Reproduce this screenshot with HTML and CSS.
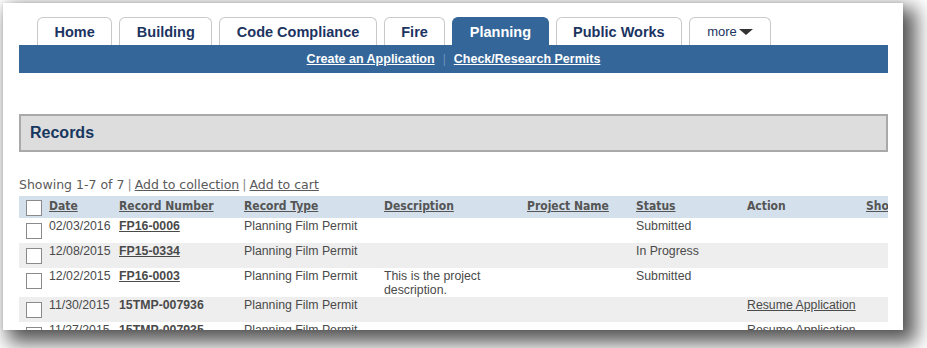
FILE: index.html
```html
<!DOCTYPE html>
<html lang="en">
<head>
<meta charset="UTF-8">
<meta name="viewport" content="width=device-width, initial-scale=1.0">
<title>Records</title>
<link rel="stylesheet" href="styles.css">
</head>
<body>
<div class="page">

  <div class="tabs">
    <a class="tab" href="#">Home</a>
    <a class="tab" href="#">Building</a>
    <a class="tab" href="#">Code Compliance</a>
    <a class="tab" href="#">Fire</a>
    <a class="tab active" href="#">Planning</a>
    <a class="tab" href="#">Public Works</a>
    <a class="tab more" href="#">more<span class="caret"></span></a>
  </div>

  <div class="subnav">
    <a href="#">Create an Application</a>
    <span class="sep">|</span>
    <a href="#">Check/Research Permits</a>
  </div>

  <div class="records-head">
    <h2>Records</h2>
  </div>

  <div class="showing">
    Showing 1-7 of 7<span class="bar">|</span><a href="#">Add to collection</a><span class="bar">|</span><a href="#">Add to cart</a>
  </div>

  <div class="grid-wrap">
    <table class="grid">
      <colgroup>
        <col class="c-chk"><col class="c-date"><col class="c-num"><col class="c-type">
        <col class="c-desc"><col class="c-proj"><col class="c-status"><col class="c-action"><col class="c-show">
      </colgroup>
      <thead>
        <tr>
          <th><span class="chk"></span></th>
          <th><a href="#">Date</a></th>
          <th><a href="#">Record Number</a></th>
          <th><a href="#">Record Type</a></th>
          <th><a href="#">Description</a></th>
          <th><a href="#">Project Name</a></th>
          <th><a href="#">Status</a></th>
          <th>Action</th>
          <th><a href="#">Short Notes</a></th>
        </tr>
      </thead>
      <tbody>
        <tr>
          <td><span class="chk"></span></td>
          <td>02/03/2016</td>
          <td><a class="num" href="#">FP16-0006</a></td>
          <td>Planning Film Permit</td>
          <td></td>
          <td></td>
          <td>Submitted</td>
          <td></td>
          <td></td>
        </tr>
        <tr class="alt">
          <td><span class="chk"></span></td>
          <td>12/08/2015</td>
          <td><a class="num" href="#">FP15-0334</a></td>
          <td>Planning Film Permit</td>
          <td></td>
          <td></td>
          <td>In Progress</td>
          <td></td>
          <td></td>
        </tr>
        <tr>
          <td><span class="chk"></span></td>
          <td>12/02/2015</td>
          <td><a class="num" href="#">FP16-0003</a></td>
          <td>Planning Film Permit</td>
          <td>This is the project description.</td>
          <td></td>
          <td>Submitted</td>
          <td></td>
          <td></td>
        </tr>
        <tr class="alt">
          <td><span class="chk"></span></td>
          <td>11/30/2015</td>
          <td><b class="num">15TMP-007936</b></td>
          <td>Planning Film Permit</td>
          <td></td>
          <td></td>
          <td></td>
          <td><a href="#">Resume Application</a></td>
          <td></td>
        </tr>
        <tr>
          <td><span class="chk"></span></td>
          <td>11/27/2015</td>
          <td><b class="num">15TMP-007935</b></td>
          <td>Planning Film Permit</td>
          <td></td>
          <td></td>
          <td></td>
          <td><a href="#">Resume Application</a></td>
          <td></td>
        </tr>
      </tbody>
    </table>
  </div>

</div>
</body>
</html>
```

FILE: styles.css
```css
html {
  background: #fff;
}

body {
  margin: 0;
  padding: 3px;
  height: 348px;
  box-sizing: border-box;
  overflow: hidden;
  font-family: "Liberation Sans", Arial, sans-serif;
}

.page {
  width: 869px;
  height: 313px;
  padding: 14px 15px 0 16px;
  background: #fff;
  overflow: hidden;
  box-shadow: 0 0 4px rgba(0, 0, 0, 0.12), 9px 9px 18px 4px rgba(0, 0, 0, 0.65);
}

/* tabs */
.tabs {
  display: flex;
  gap: 7px;
  padding-left: 18px;
  height: 28px;
}

.tab {
  display: flex;
  align-items: center;
  padding: 0 16.5px;
  height: 27px;
  border: 1px solid #c9c9c9;
  border-bottom: none;
  border-radius: 6px 6px 0 0;
  background: #fff;
  color: #1b3461;
  font-size: 14.5px;
  font-weight: bold;
  text-decoration: none;
}

.tab.active {
  background: #346699;
  border-color: #346699;
  color: #fff;
}

.tab.more {
  width: 46px;
  padding: 0 17px 0 17px;
  font-size: 13px;
  font-weight: normal;
}

.caret {
  display: inline-block;
  margin-left: 2px;
  margin-top: 1px;
  border-left: 7px solid transparent;
  border-right: 7px solid transparent;
  border-top: 6px solid #333;
}

/* blue sub navigation */
.subnav {
  display: flex;
  justify-content: center;
  align-items: center;
  gap: 8px;
  height: 28px;
  background: #346699;
}

.subnav a {
  color: #fff;
  font-size: 12.5px;
  font-weight: bold;
}

.subnav .sep {
  color: #6f8fb5;
  font-size: 12px;
}

/* records box */
.records-head {
  margin-top: 41px;
  height: 34px;
  display: flex;
  align-items: center;
  padding-left: 9px;
  background: #dddddd;
  border: 2px solid #a9a9a9;
}

.records-head h2 {
  margin: 0;
  font-size: 16px;
  color: #17375e;
}

.showing {
  margin-top: 26px;
  line-height: 14px;
  font-family: "DejaVu Sans", Verdana, sans-serif;
  font-size: 12.5px;
  color: #5a5a5a;
}

.showing a {
  color: #5a5a5a;
}

.showing .bar {
  margin: 0 3px 0 3px;
  color: #888;
}

/* records grid */
.grid-wrap {
  margin-top: 4px;
  width: 869px;
  overflow: hidden;
}

.grid {
  width: 947px;
  table-layout: fixed;
  border-collapse: collapse;
  font-size: 12.3px;
  color: #4a4a4a;
}

.c-chk { width: 30px; }
.c-date { width: 70px; }
.c-num { width: 125px; }
.c-type { width: 140px; }
.c-desc { width: 143px; }
.c-proj { width: 109px; }
.c-status { width: 111px; }
.c-action { width: 119px; }
.c-show { width: 100px; }

.grid th {
  height: 22px;
  padding: 0;
  text-align: left;
  vertical-align: top;
  background: #d4e1ec;
  font-family: "DejaVu Sans Condensed", "DejaVu Sans", sans-serif;
  font-stretch: condensed;
  font-size: 12px;
  line-height: 20px;
  color: #555;
  white-space: nowrap;
}

.grid th a {
  color: #555;
}

.grid td {
  padding: 1px 0 0;
  vertical-align: top;
  line-height: 14px;
}

.grid tr.alt td {
  background: #eeeeee;
}

.grid td:first-child,
.grid th:first-child {
  padding-left: 7px;
}

.chk {
  display: block;
  width: 14px;
  height: 14px;
  margin: 4px 0 4px;
  border: 1px solid #8a8a8a;
  background: #fff;
}

.grid th .chk {
  margin: 4px 0 0;
}

.num {
  font-weight: bold;
  color: #4a4a4a;
}

.grid td a {
  color: #4a4a4a;
}
```
